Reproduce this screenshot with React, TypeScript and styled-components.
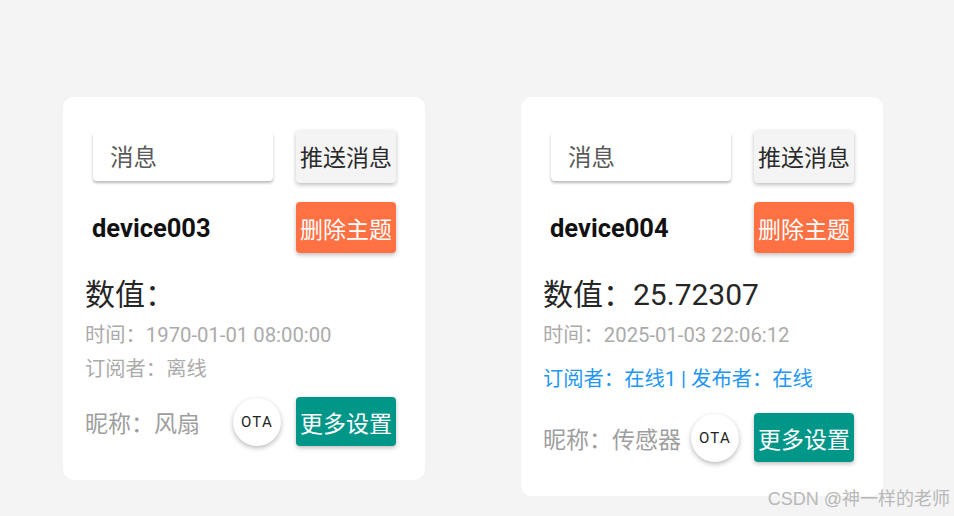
import React from "react";
import styled, { createGlobalStyle } from "styled-components";

const Global = createGlobalStyle`
  html, body { margin: 0; padding: 0; background: #f4f4f4; }
  body {
    font-family: Roboto, "Noto Sans CJK SC", sans-serif;
    width: 954px; height: 516px; overflow: hidden;
  }
  #root { position: relative; width: 954px; height: 516px; }
`;

const Page = styled.div`
  display: flex;
  align-items: flex-start;
  gap: 96px;
  padding: 97px 0 0 63px;
`;

const Card = styled.div`
  width: 362px;
  background: #ffffff;
  border-radius: 11px;
  padding: 32px 0 34px;
  box-sizing: border-box;
  display: flex;
  flex-direction: column;
`;

const Row = styled.div<{ $mt?: number; $pl?: number; $h?: number }>`
  display: flex;
  align-items: center;
  justify-content: space-between;
  height: ${(p) => (p.$h ? `${p.$h}px` : "auto")};
  margin-top: ${(p) => p.$mt ?? 0}px;
  padding: 0 29px 0 ${(p) => p.$pl ?? 30}px;
`;

const Input = styled.div`
  width: 180px;
  height: 49px;
  background: #fff;
  border-radius: 4px;
  box-shadow: 0 2px 3px rgba(0, 0, 0, 0.28);
  box-sizing: border-box;
  padding-left: 17px;
  display: flex;
  align-items: center;
  font-size: 23.5px;
  color: #5a5a5a;
`;

const Btn = styled.div<{ $bg: string; $fg: string; $h: number }>`
  width: 100px;
  height: ${(p) => p.$h}px;
  background: ${(p) => p.$bg};
  color: ${(p) => p.$fg};
  border-radius: 4px;
  box-shadow: 0 2px 4px rgba(0, 0, 0, 0.25);
  display: flex;
  align-items: center;
  justify-content: center;
  font-size: 23px;
  white-space: nowrap;
`;

const DeviceName = styled.div`
  font-weight: 700;
  font-size: 25.5px;
  color: #111;
`;

const ValueLine = styled.div`
  margin-top: 24px;
  padding-left: 22px;
  font-size: 30px;
  line-height: 36px;
  color: #262626;
`;

const InfoLine = styled.div<{ $mt: number; $mb?: number; $blue?: boolean }>`
  margin-top: ${(p) => p.$mt}px;
  margin-bottom: ${(p) => p.$mb ?? 0}px;
  padding-left: 22px;
  font-size: 20.3px;
  line-height: 28px;
  color: ${(p) => (p.$blue ? "#2196f3" : "#ababab")};
`;

const Nick = styled.div`
  flex: 1;
  font-size: 23px;
  color: #9e9e9e;
`;

const Ota = styled.div`
  width: 48px;
  height: 48px;
  border-radius: 50%;
  background: #fff;
  box-shadow: 0 2px 5px rgba(0, 0, 0, 0.28);
  display: flex;
  align-items: center;
  justify-content: center;
  font-size: 15px;
  letter-spacing: 1.3px;
  color: #222;
  margin-right: 15px;
`;

const Watermark = styled.div`
  position: absolute;
  right: 4px;
  top: 484px;
  font-family: "Liberation Sans", "Noto Sans CJK SC", sans-serif;
  font-size: 18px;
  color: #b8b8b8;
`;

type Device = {
  name: string;
  value: string;
  time: string;
  sub: string;
  online: boolean;
  nick: string;
};

const devices: Device[] = [
  {
    name: "device003",
    value: "",
    time: "1970-01-01 08:00:00",
    sub: "订阅者：离线",
    online: false,
    nick: "风扇",
  },
  {
    name: "device004",
    value: "25.72307",
    time: "2025-01-03 22:06:12",
    sub: "订阅者：在线1 | 发布者：在线",
    online: true,
    nick: "传感器",
  },
];

function DeviceCard({ d }: { d: Device }) {
  return (
    <Card>
      <Row $h={54}>
        <Input>消息</Input>
        <Btn $bg="#f4f4f4" $fg="#2a2a2a" $h={53}>
          推送消息
        </Btn>
      </Row>
      <Row $mt={19} $pl={29}>
        <DeviceName>{d.name}</DeviceName>
        <Btn $bg="#ff7043" $fg="#fff" $h={51}>
          删除主题
        </Btn>
      </Row>
      <ValueLine>数值：{d.value}</ValueLine>
      <InfoLine $mt={8}>时间：{d.time}</InfoLine>
      <InfoLine $mt={d.online ? 16 : 6} $mb={d.online ? 6 : 0} $blue={d.online}>
        {d.sub}
      </InfoLine>
      <Row $mt={14} $pl={22}>
        <Nick>昵称：{d.nick}</Nick>
        <Ota>OTA</Ota>
        <Btn $bg="#009688" $fg="#fff" $h={49}>
          更多设置
        </Btn>
      </Row>
    </Card>
  );
}

export default function App() {
  return (
    <>
      <Global />
      <Page>
        {devices.map((d) => (
          <DeviceCard key={d.name} d={d} />
        ))}
      </Page>
      <Watermark>CSDN @神一样的老师</Watermark>
    </>
  );
}
